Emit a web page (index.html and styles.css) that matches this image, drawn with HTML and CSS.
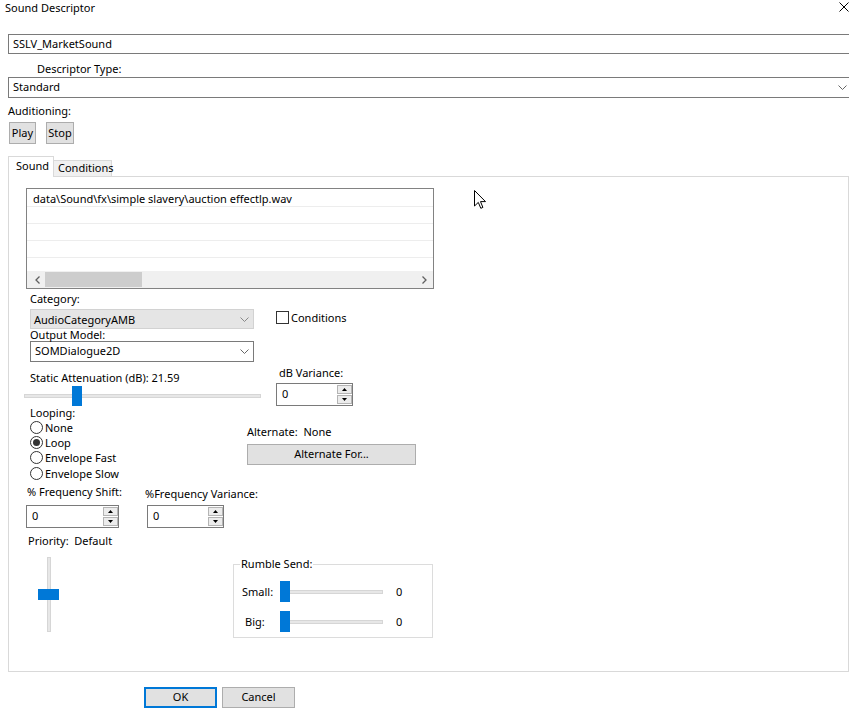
FILE: index.html
```html
<!DOCTYPE html>
<html>
<head>
<meta charset="utf-8">
<title>Sound Descriptor</title>
<link rel="stylesheet" href="styles.css">
</head>
<body>
<div class="titlebar">
  <span class="title">Sound Descriptor</span>
  <svg class="close" width="10" height="10" viewBox="0 0 10 10"><path d="M0.5 0.5 L9.5 9.5 M9.5 0.5 L0.5 9.5" stroke="#000" stroke-width="1" fill="none"/></svg>
</div>
<div class="textbox name-box">SSLV_MarketSound</div>
<div class="lbl desc-type">Descriptor Type:</div>
<div class="combo type-combo"><span class="txt">Standard</span><svg class="chev" width="9" height="5" viewBox="0 0 9 5"><path d="M0.5 0.5 L4.5 4.5 L8.5 0.5" fill="none" stroke="#666"/></svg></div>
<div class="lbl audition">Auditioning:</div>
<div class="btn-row">
  <button class="btn play">Play</button>
  <button class="btn stop">Stop</button>
</div>
<div class="tabs">
  <div class="tab tab-active">Sound</div>
  <div class="tab tab-idle">Conditions</div>
</div>
<div class="panel">
  <div class="listbox">
    <div class="lb-rows">
      <div class="lb-row">data\Sound\fx\simple slavery\auction effectlp.wav</div>
      <div class="lb-row"></div>
      <div class="lb-row"></div>
      <div class="lb-row"></div>
    </div>
    <div class="hscroll">
      <span class="sb-btn"><svg width="5" height="8" viewBox="0 0 5 8"><path d="M4.5 0.5 L1 4 L4.5 7.5" fill="none" stroke="#606060" stroke-width="1.3"/></svg></span>
      <span class="sb-track"><span class="sb-thumb"></span></span>
      <span class="sb-btn"><svg width="5" height="8" viewBox="0 0 5 8"><path d="M0.5 0.5 L4 4 L0.5 7.5" fill="none" stroke="#606060" stroke-width="1.3"/></svg></span>
    </div>
  </div>

  <div class="sec sec-category">
    <div class="cat-left">
      <div class="lbl">Category:</div>
      <div class="combo combo-ro"><span>AudioCategoryAMB</span><svg class="chev" width="9" height="5" viewBox="0 0 9 5"><path d="M0.5 0.5 L4.5 4.5 L8.5 0.5" fill="none" stroke="#888"/></svg></div>
      <div class="lbl lbl-tight">Output Model:</div>
      <div class="combo combo-out"><span class="txt">SOMDialogue2D</span><svg class="chev" width="9" height="5" viewBox="0 0 9 5"><path d="M0.5 0.5 L4.5 4.5 L8.5 0.5" fill="none" stroke="#666"/></svg></div>
    </div>
    <div class="cat-right">
      <div class="checkline"><span class="check"></span><span>Conditions</span></div>
    </div>
  </div>

  <div class="sec sec-atten">
    <div class="att-left">
      <div class="lbl att-label">Static Attenuation (dB): 21.59</div>
      <div class="hslider">
        <span class="track"></span>
        <span class="thumb att-thumb"></span>
      </div>
    </div>
    <div class="att-right">
      <div class="lbl dbvar-label">dB Variance:</div>
      <div class="spin spin-db">
        <span class="spin-val">0</span>
        <span class="spin-btns">
          <span class="spin-btn"><svg width="5" height="3" viewBox="0 0 5 3"><path d="M0 3 L2.5 0 L5 3Z" fill="#000"/></svg></span>
          <span class="spin-btn"><svg width="5" height="3" viewBox="0 0 5 3"><path d="M0 0 L2.5 3 L5 0Z" fill="#000"/></svg></span>
        </span>
      </div>
    </div>
  </div>

  <div class="sec sec-loop">
    <div class="loop-left">
      <div class="lbl loop-label">Looping:</div>
      <div class="radio-line"><span class="radio"></span><span class="txt-half">None</span></div>
      <div class="radio-line"><span class="radio radio-on"></span><span class="txt-half">Loop</span></div>
      <div class="radio-line"><span class="radio"></span><span class="txt-half">Envelope Fast</span></div>
      <div class="radio-line radio-last"><span class="radio"></span><span class="txt-half">Envelope Slow</span></div>
    </div>
    <div class="loop-right">
      <div class="lbl alt-label">Alternate:&nbsp; None</div>
      <button class="btn alt-btn">Alternate For...</button>
    </div>
  </div>

  <div class="sec sec-freq">
    <div class="freq-col1">
      <div class="lbl freq1-label">% Frequency Shift:</div>
      <div class="spin spin-f1">
        <span class="spin-val">0</span>
        <span class="spin-btns">
          <span class="spin-btn"><svg width="5" height="3" viewBox="0 0 5 3"><path d="M0 3 L2.5 0 L5 3Z" fill="#000"/></svg></span>
          <span class="spin-btn"><svg width="5" height="3" viewBox="0 0 5 3"><path d="M0 0 L2.5 3 L5 0Z" fill="#000"/></svg></span>
        </span>
      </div>
    </div>
    <div class="freq-col2">
      <div class="lbl freq2-label">%Frequency Variance:</div>
      <div class="spin spin-f2">
        <span class="spin-val">0</span>
        <span class="spin-btns">
          <span class="spin-btn"><svg width="5" height="3" viewBox="0 0 5 3"><path d="M0 3 L2.5 0 L5 3Z" fill="#000"/></svg></span>
          <span class="spin-btn"><svg width="5" height="3" viewBox="0 0 5 3"><path d="M0 0 L2.5 3 L5 0Z" fill="#000"/></svg></span>
        </span>
      </div>
    </div>
  </div>

  <div class="sec sec-priority">
    <div class="prio-left">
      <div class="lbl prio-label">Priority:&nbsp; Default</div>
      <div class="vslider">
        <span class="vtrack"></span>
        <span class="vthumb"></span>
      </div>
    </div>
    <div class="rumble">
      <div class="rumble-title">Rumble Send:</div>
      <div class="rumble-row">
        <span class="rumble-name">Small:</span>
        <span class="rslider"><span class="track"></span><span class="thumb r-thumb"></span></span>
        <span class="rumble-val">0</span>
      </div>
      <div class="rumble-row">
        <span class="rumble-name rumble-name-big">Big:</span>
        <span class="rslider"><span class="track"></span><span class="thumb r-thumb"></span></span>
        <span class="rumble-val">0</span>
      </div>
    </div>
  </div>
</div>

<div class="footer">
  <button class="btn ok">OK</button>
  <button class="btn cancel">Cancel</button>
</div>

<svg class="cursor" width="13" height="20" viewBox="0 0 13 20"><path d="M0.5 0.5 V16 L4.3 12.4 L6.8 18.3 L8.9 17.4 L6.5 11.6 H11.5 Z" fill="#fff" stroke="#000" stroke-width="1" stroke-linejoin="miter"/></svg>
</body>
</html>
```
FILE: styles.css
```css
* { box-sizing: border-box; }
html, body { margin: 0; padding: 0; background: #fff; }
body {
  width: 849px;
  height: 717px;
  overflow: hidden;
  position: relative;
  font-family: "Noto Sans", "Open Sans", sans-serif;
  font-size: 11px;
  line-height: 15px;
  color: #000;
}
svg { display: block; }

/* nudges a flex-centred text up */
.txt { padding-bottom: 2px; }
.txt-half { padding-bottom: 1px; }

.titlebar {
  display: flex;
  justify-content: space-between;
  align-items: flex-start;
  height: 17px;
  padding-left: 5px;
  line-height: 15px;
}
.close { margin-top: 2px; margin-right: 0; }

.textbox {
  height: 20px;
  margin-left: 8px;
  border: 1px solid #7a7a7a;
  border-right: 0;
  padding-left: 4px;
  line-height: 18px;
}
.name-box { margin-top: 17px; }

.lbl { height: 15px; line-height: 13px; white-space: nowrap; }
.desc-type { margin: 8px 0 0 37px; }

.combo {
  display: flex;
  align-items: center;
  justify-content: space-between;
  height: 21px;
  border: 1px solid #7a7a7a;
  padding: 0 4px 0 4px;
  background: #fff;
  white-space: nowrap;
}
.type-combo { margin-left: 8px; border-right: 0; padding-right: 2px; }

.audition { margin: 6px 0 0 8px; }
.btn-row { display: flex; gap: 10px; margin: 3px 0 0 9px; }
.btn {
  font: inherit;
  color: #000;
  height: 22px;
  padding: 0 0 2px 0;
  background: #e1e1e1;
  border: 1px solid #adadad;
  line-height: 15px;
}
.play { width: 27px; }
.stop { width: 28px; }

.tabs {
  display: flex;
  align-items: flex-end;
  height: 20px;
  margin: 12px 0 0 8px;
  position: relative;
  z-index: 1;
}
.tab { border: 1px solid #d9d9d9; border-bottom: 0; white-space: nowrap; }
.tab-active {
  width: 46px;
  height: 21px;
  margin-bottom: -1px;
  background: #fff;
  padding: 1px 0 0 7px;
}
.tab-idle {
  width: 58px;
  height: 16px;
  border-left: 0;
  background: #f0f0f0;
  padding: 0 0 0 4px;
  line-height: 13px;
}

.panel {
  width: 841px;
  height: 496px;
  margin-left: 8px;
  border: 1px solid #d9d9d9;
  background: #fff;
}

.listbox {
  display: flex;
  flex-direction: column;
  width: 408px;
  height: 101px;
  margin: 11px 0 0 17px;
  border: 1px solid #828282;
}
.lb-rows { height: 82px; padding-top: 1px; }
.lb-row {
  height: 17px;
  padding: 1px 0 0 6px;
  border-bottom: 1px solid #ededed;
  line-height: 15px;
  white-space: nowrap;
}
.hscroll { display: flex; height: 17px; background: #f0f0f0; }
.sb-btn { width: 17px; display: flex; align-items: center; justify-content: center; }
.sb-btn:first-child { padding-left: 3px; }
.sb-track { flex: 1; padding: 1px 0; }
.sb-thumb { display: block; width: 97px; height: 15px; margin-left: 1px; background: #cdcdcd; }

.sec { display: flex; }

.sec-category { margin-top: 3px; }
.cat-left { width: 224px; margin-left: 21px; }
.combo-ro { margin-top: 2px; height: 20px; background: #e5e5e5; border-color: #d2d2d2; padding-left: 3px; }
.lbl-tight { height: 12px; line-height: 12px; }
.combo-out { height: 21px; }
.cat-right { margin-left: 22px; padding-top: 19px; }
.checkline { display: flex; align-items: center; gap: 2px; height: 13px; white-space: nowrap; }
.check { width: 13px; height: 13px; border: 1px solid #333; background: #fff; flex: none; }

.att-left { width: 237px; margin-left: 15px; }
.att-label { margin: 9px 0 0 6px; }
.hslider { position: relative; height: 20px; }
.track {
  position: absolute;
  left: 0;
  right: 0;
  height: 4px;
  background: #e7e7e7;
  border: 1px solid #d6d6d6;
}
.hslider .track { top: 8px; }
.thumb { position: absolute; top: 0; width: 10px; background: #0078d7; }
.att-thumb { left: 48px; height: 20px; }
.att-right { margin-left: 15px; }
.dbvar-label { margin: 4px 0 0 3px; }

.spin {
  display: flex;
  height: 23px;
  border: 1px solid #7a7a7a;
  background: #fff;
}
.spin-val { flex: 1; padding-left: 5px; line-height: 19px; }
.spin-btns { display: flex; flex-direction: column; width: 15px; padding: 1px 0 1px 0; }
.spin-btn {
  flex: 1;
  display: flex;
  align-items: center;
  justify-content: center;
  background: #ececec;
  border: 1px solid #b4b4b4;
}
.spin-btn + .spin-btn { margin-top: 1px; }
.spin-db { width: 77px; margin-top: 2px; }

.loop-left { width: 217px; margin-left: 21px; }
.loop-label { height: 14px; line-height: 13px; }
.radio-line { display: flex; align-items: center; gap: 2px; height: 15px; white-space: nowrap; }
.radio-last { margin-top: 1px; }
.radio {
  position: relative;
  flex: none;
  width: 13px;
  height: 13px;
  border: 1px solid #333;
  border-radius: 50%;
  background: #fff;
}
.radio-on::after {
  content: "";
  position: absolute;
  left: 2px;
  top: 2px;
  width: 7px;
  height: 7px;
  border-radius: 50%;
  background: #333;
}
.alt-label { margin-top: 19px; }
.alt-btn { display: block; width: 169px; height: 21px; margin-top: 4px; }

.freq-col1 { width: 93px; margin-left: 17px; }
.freq1-label { margin: 4px 0 0 1px; }
.spin-f1 { width: 93px; margin-top: 5px; }
.freq-col2 { margin-left: 26px; }
.freq2-label { margin-top: 6px; }
.spin-f2 { width: 77px; margin: 3px 0 0 2px; }

.prio-left { width: 205px; margin-left: 19px; }
.prio-label { margin-top: 6px; }
.vslider { position: relative; width: 21px; height: 75px; margin: 8px 0 0 10px; }
.vtrack {
  position: absolute;
  left: 9px;
  top: 0;
  bottom: 0;
  width: 4px;
  background: #e7e7e7;
  border: 1px solid #d6d6d6;
}
.vthumb { position: absolute; left: 0; top: 32px; width: 21px; height: 11px; background: #0078d7; }

.rumble {
  width: 200px;
  height: 74px;
  margin-top: 36px;
  border: 1px solid #dcdcdc;
}
.rumble-title {
  width: fit-content;
  margin: -8px 0 0 6px;
  padding: 0 1px;
  background: #fff;
  line-height: 14px;
  white-space: nowrap;
}
.rumble-row { display: flex; align-items: center; height: 21px; margin-top: 9px; }
.rumble-title + .rumble-row { margin-top: 10px; }
.rumble-name { width: 46px; padding-left: 8px; }
.rumble-name-big { padding-left: 11px; }
.rslider { position: relative; width: 103px; height: 21px; }
.rslider .track { top: 9px; }
.r-thumb { left: 0; height: 21px; }
.rumble-val { margin-left: 13px; }

.footer { display: flex; gap: 5px; margin: 15px 0 0 144px; }
.ok, .cancel { width: 73px; height: 21px; }
.ok { border: 2px solid #0078d7; }

.cursor { position: absolute; left: 474px; top: 190px; }
```
